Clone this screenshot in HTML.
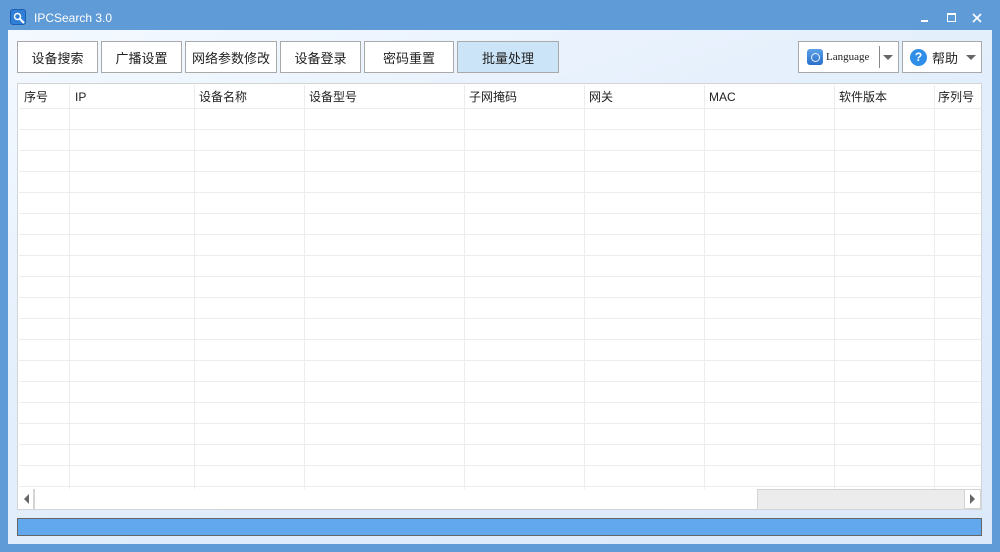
<!DOCTYPE html>
<html><head><meta charset="utf-8"><style>
*{margin:0;padding:0;box-sizing:border-box}
body{width:1000px;height:552px;overflow:hidden;background:#5f9bd6;font-family:"Liberation Sans","Noto Sans CJK SC",sans-serif;position:relative}
.abs{position:absolute}
.title{left:34px;top:11px;color:#fff;font-size:12px}
.client{left:8px;top:30px;width:984px;height:514px;background:linear-gradient(160deg,#f4f9ff 0%,#e4effc 40%,#dbe9fa 100%)}
.btn{position:absolute;top:41px;height:32px;border:1px solid #a9a9a9;background:#fff;font-size:13px;color:#222;display:flex;align-items:center;justify-content:center}
.table{left:17px;top:83px;width:965px;height:427px;background:#fff;border:1px solid #d4d4d4;overflow:hidden}
.vl{position:absolute;top:1px;width:1px;height:404px;background:#ececec}
.hl{position:absolute;left:1px;width:962px;height:1px;background:#ececec}
.hd{position:absolute;top:6px;font-size:12px;line-height:14px;height:14px;color:#222;display:flex;align-items:center}
</style></head><body>
<div class="abs" style="left:10px;top:9px;width:16px;height:16px;background:#2f7fd8;border-radius:3px;border:1px solid #1d5fae">
<svg width="14" height="14" style="position:absolute;left:1px;top:1px"><circle cx="5.5" cy="5.5" r="3" stroke="#fff" stroke-width="1.5" fill="none"/><path d="M8 8l4 4" stroke="#fff" stroke-width="2"/></svg></div>
<div class="abs title">IPCSearch 3.0</div>
<div class="abs" style="left:921px;top:20px;width:7px;height:2px;background:#fff"></div>
<div class="abs" style="left:947px;top:13px;width:9px;height:9px;border:1.5px solid #fff;border-top-width:2px"></div>
<svg class="abs" style="left:972px;top:13px" width="10" height="10"><path d="M1 1L9 9M9 1L1 9" stroke="#fff" stroke-width="1.6"/></svg>
<div class="abs client"></div>
<div class="btn" style="left:17px;width:81px">设备搜索</div>
<div class="btn" style="left:101px;width:81px">广播设置</div>
<div class="btn" style="left:185px;width:92px">网络参数修改</div>
<div class="btn" style="left:280px;width:81px">设备登录</div>
<div class="btn" style="left:364px;width:90px">密码重置</div>
<div class="btn" style="left:457px;width:102px;background:#cce4f7">批量处理</div>
<div class="btn" style="left:798px;width:101px;justify-content:flex-start">
<div style="margin-left:8px;width:16px;height:16px;border-radius:3px;background:linear-gradient(#5aa0e8,#2a70c8);display:flex;align-items:center;justify-content:center"><div style="width:9px;height:9px;border:1.5px solid #e8f2ff;border-radius:50%"></div></div>
<span style="font-family:'Liberation Serif',serif;font-size:11px;margin-left:3px">Language</span>
<div style="position:absolute;left:80px;top:4px;width:1px;height:22px;background:#888"></div>
<div style="position:absolute;left:84px;top:13px;border-left:5px solid transparent;border-right:5px solid transparent;border-top:5px solid #666"></div></div>
<div class="btn" style="left:902px;width:80px;justify-content:flex-start">
<div style="margin-left:7px;width:17px;height:17px;border-radius:50%;background:#2f8ee8;color:#fff;font-size:12px;font-weight:bold;display:flex;align-items:center;justify-content:center">?</div>
<span style="margin-left:5px">帮助</span>
<div style="position:absolute;left:63px;top:13px;border-left:5px solid transparent;border-right:5px solid transparent;border-top:5px solid #666"></div></div>
<div class="abs table">
<div class="hl" style="top:24px"></div>
<div class="hl" style="top:45px"></div><div class="hl" style="top:66px"></div><div class="hl" style="top:87px"></div><div class="hl" style="top:108px"></div><div class="hl" style="top:129px"></div><div class="hl" style="top:150px"></div><div class="hl" style="top:171px"></div><div class="hl" style="top:192px"></div><div class="hl" style="top:213px"></div><div class="hl" style="top:234px"></div><div class="hl" style="top:255px"></div><div class="hl" style="top:276px"></div><div class="hl" style="top:297px"></div><div class="hl" style="top:318px"></div><div class="hl" style="top:339px"></div><div class="hl" style="top:360px"></div><div class="hl" style="top:381px"></div><div class="hl" style="top:402px"></div>
<div class="vl" style="left:51px"></div><div class="vl" style="left:176px"></div><div class="vl" style="left:286px"></div><div class="vl" style="left:446px"></div><div class="vl" style="left:566px"></div><div class="vl" style="left:686px"></div><div class="vl" style="left:816px"></div><div class="vl" style="left:916px"></div>
<div class="hd" style="left:6px">序号</div><div class="hd" style="left:57px">IP</div><div class="hd" style="left:181px">设备名称</div><div class="hd" style="left:291px">设备型号</div><div class="hd" style="left:451px">子网掩码</div><div class="hd" style="left:571px">网关</div><div class="hd" style="left:691px">MAC</div><div class="hd" style="left:821px">软件版本</div><div class="hd" style="left:920px">序列号</div>
<div class="abs" style="left:0;top:405px;width:963px;height:20px;background:#ececec;border-top:1px solid #d4d4d4"></div>
<div class="abs" style="left:0;top:405px;width:17px;height:20px;background:#fff;border-right:2px solid #d4d4d4"></div>
<div class="abs" style="left:6px;top:410px;border-top:5px solid transparent;border-bottom:5px solid transparent;border-right:5px solid #666"></div>
<div class="abs" style="left:17px;top:405px;width:723px;height:20px;background:#fff;border-right:1px solid #d4d4d4"></div>
<div class="abs" style="left:946px;top:405px;width:17px;height:20px;background:#fff;border:1px solid #d4d4d4"></div>
<div class="abs" style="left:952px;top:410px;border-top:5px solid transparent;border-bottom:5px solid transparent;border-left:5px solid #666"></div>
</div>
<div class="abs" style="left:17px;top:518px;width:965px;height:18px;background:#62a8ee;border:1px solid #666"></div>
</body></html>
